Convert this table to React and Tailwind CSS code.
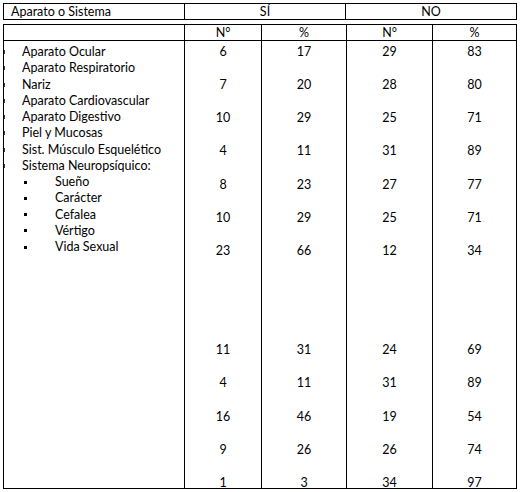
import React from "react";

const rows = [
  ["6", "17", "29", "83"],
  ["7", "20", "28", "80"],
  ["10", "29", "25", "71"],
  ["4", "11", "31", "89"],
  ["8", "23", "27", "77"],
  ["10", "29", "25", "71"],
  ["23", "66", "12", "34"],
  null,
  null,
  ["11", "31", "24", "69"],
  ["4", "11", "31", "89"],
  ["16", "46", "19", "54"],
  ["9", "26", "26", "74"],
  ["1", "3", "34", "97"],
];

const top = [
  "Aparato Ocular",
  "Aparato Respiratorio",
  "Nariz",
  "Aparato Cardiovascular",
  "Aparato Digestivo",
  "Piel y Mucosas",
  "Sist. Músculo Esquelético",
  "Sistema Neuropsíquico:",
];
const sub = ["Sueño", "Carácter", "Cefalea", "Vértigo", "Vida Sexual"];

function NumCol({ idx, w, last }) {
  return (
    <div className={`${w} shrink-0 ${last ? "" : "border-r border-black"} pt-[3px] flex flex-col`}>
      {rows.map((r, i) => (
        <div key={i} className="h-[33.15px] shrink-0 text-center leading-[16.25px]">
          {r ? r[idx] : ""}
        </div>
      ))}
    </div>
  );
}

export default function App() {
  return (
    <div
      className="w-[520px] h-[492px] bg-white text-black pl-[3px] pt-[3px] text-[12.5px]"
      style={{ fontFamily: "Lato, 'Liberation Sans', sans-serif" }}
    >
      {/* Header table */}
      <div className="w-[514px] flex border border-black h-[17px] leading-[15px]">
        <div className="w-[181px] shrink-0 border-r border-black pl-[7px]">Aparato o Sistema</div>
        <div className="w-[161px] shrink-0 border-r border-black text-center">SÍ</div>
        <div className="w-[170px] shrink-0 text-center">NO</div>
      </div>

      {/* Main table */}
      <div className="w-[514px] mt-[4px] border border-black">
        <div className="flex h-[16px] leading-[15px] border-b border-black">
          <div className="w-[181px] shrink-0 border-r border-black"></div>
          <div className="w-[77px] shrink-0 border-r border-black text-center">N°</div>
          <div className="w-[85px] shrink-0 border-r border-black text-center">%</div>
          <div className="w-[86px] shrink-0 border-r border-black text-center">N°</div>
          <div className="w-[83px] shrink-0 text-center">%</div>
        </div>
        <div className="flex h-[447px]">
          <div className="w-[181px] shrink-0 border-r border-black pt-[3px] flex flex-col">
            {top.map((t) => (
              <div key={t} className="flex items-center h-[16.25px] leading-[16.25px]">
                <span className="w-[1px] h-[4px] bg-[#1f3a8a] shrink-0"></span>
                <span className="ml-[17px] whitespace-nowrap">{t}</span>
              </div>
            ))}
            {sub.map((t) => (
              <div key={t} className="flex items-center h-[16.25px] leading-[16.25px]">
                <span className="ml-[20px] w-[3px] h-[3px] bg-black shrink-0"></span>
                <span className="ml-[28px] whitespace-nowrap">{t}</span>
              </div>
            ))}
          </div>
          <NumCol idx={0} w="w-[77px]" />
          <NumCol idx={1} w="w-[85px]" />
          <NumCol idx={2} w="w-[86px]" />
          <NumCol idx={3} w="w-[83px]" last />
        </div>
      </div>
    </div>
  );
}
